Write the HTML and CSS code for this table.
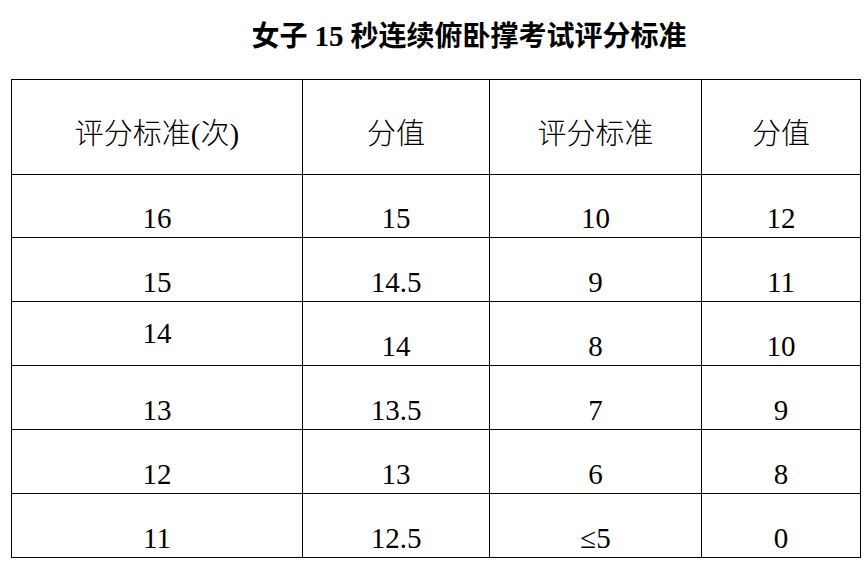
FILE: index.html
```html
<!DOCTYPE html>
<html lang="zh-CN">
<head>
<meta charset="utf-8">
<title>女子15秒连续俯卧撑考试评分标准</title>
<link rel="stylesheet" href="styles.css">
</head>
<body>
<div class="page">
  <h1 class="title">女子 <span class="num">15</span> 秒连续俯卧撑考试评分标准</h1>
  <table class="score">
    <colgroup>
      <col class="c1"><col class="c2"><col class="c3"><col class="c4">
    </colgroup>
    <thead>
      <tr class="head">
        <th>评分标准(次)</th>
        <th>分值</th>
        <th>评分标准</th>
        <th>分值</th>
      </tr>
    </thead>
    <tbody>
      <tr class="first"><td>16</td><td>15</td><td>10</td><td>12</td></tr>
      <tr><td>15</td><td>14.5</td><td>9</td><td>11</td></tr>
      <tr><td class="raised">14</td><td>14</td><td>8</td><td>10</td></tr>
      <tr><td>13</td><td>13.5</td><td>7</td><td>9</td></tr>
      <tr><td>12</td><td>13</td><td>6</td><td>8</td></tr>
      <tr><td>11</td><td>12.5</td><td>≤5</td><td>0</td></tr>
    </tbody>
  </table>
</div>
</body>
</html>
```
FILE: styles.css
```css
html, body {
  margin: 0;
  padding: 0;
  background: #ffffff;
}

.page {
  width: 868px;
  height: 566px;
  color: #000;
  font-family: "Liberation Serif", "Noto Sans CJK SC", serif;
}

.title {
  margin: 0;
  box-sizing: border-box;
  height: 79px;
  padding: 22px 0 0 70px;
  font-size: 28px;
  line-height: 28px;
  font-weight: 700;
  text-align: center;
  white-space: nowrap;
}

.title .num {
  font-size: 29px;
}

.score {
  margin-left: 11px;
  width: 850px;
  border-collapse: collapse;
  table-layout: fixed;
  font-size: 29px;
  line-height: 29px;
}

.c1 { width: 291px; }
.c2 { width: 187px; }
.c3 { width: 212px; }
.c4 { width: 159px; }

.score tr.head { height: 95px; }
.score tbody tr { height: 64px; }
.score tbody tr.first { height: 63px; }

.score th,
.score td {
  border: 1px solid #000;
  padding: 0 0 4px 0;
  text-align: center;
  vertical-align: bottom;
}

.score th {
  font-weight: 300;
  padding-bottom: 25px;
}

.score td.raised {
  padding-bottom: 17px;
}
```
